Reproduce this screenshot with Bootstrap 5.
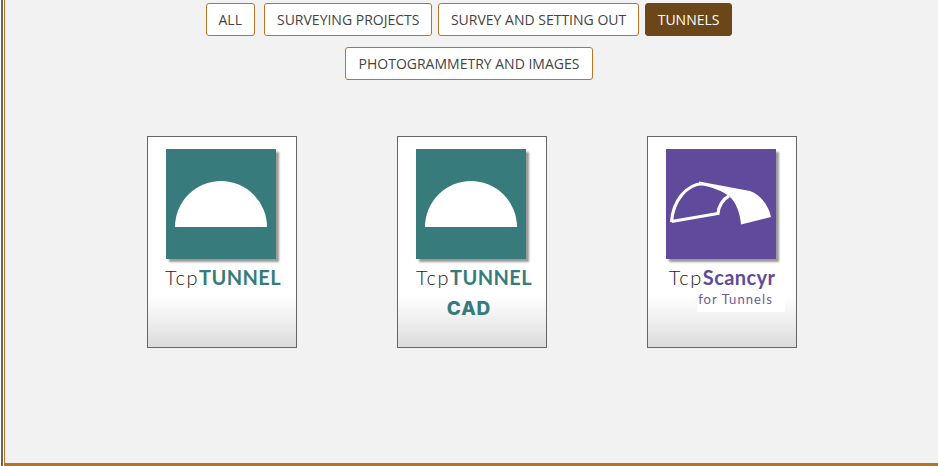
<!DOCTYPE html>
<html lang="en">
<head>
  <meta charset="UTF-8" />
  <title>Tunnels</title>
  <link href="https://cdn.jsdelivr.net/npm/bootstrap@5.3.0/dist/css/bootstrap.min.css" rel="stylesheet">
  <style>
    body { background: #f2f2f2; font-family: "Open Sans", sans-serif; overflow: hidden; }
    .page-frame {
      height: 466px;
      box-shadow: inset 1px 0 #fff, inset 3px 0 #6b625c, inset 4px 0 #fff, inset 5px 0 #b5741f, inset 0 -3px #b5741f;
    }
    .filter-bar { width: 700px; padding-top: 3px; column-gap: 5.5px; row-gap: 11px; }
    .filter-btn {
      background: #fff; border: 1px solid #b5762a; border-radius: 3px; color: #444;
      font-size: 14px; line-height: 19px; padding: 6px 12px; height: 33px;
    }
    .filter-btn:hover { background: #fff; border-color: #b5762a; color: #444; }
    .filter-btn.active, .filter-btn.active:hover { background: #6b4619; border-color: #6b4619; color: #fff; font-weight: 500; }
    .filter-all { margin-right: 3.5px; }
    .filter-wide { padding: 6px 13px; }
    .product-row { padding-left: 6px; margin-top: 56px; gap: 100px; }
    .product-tile {
      width: 150px; height: 212px; padding-top: 12px; border: 1px solid #666; border-radius: 0;
      background: linear-gradient(#fff 0, #fff 76%, #dcdcdc 100%);
    }
    .product-art { width: 110px; height: 110px; display: block; margin-right: 2px; box-shadow: 3px 3px 2px #999; }
    .product-name { font-family: Lato, sans-serif; font-size: 20px; line-height: 24px; margin-top: 6px; color: #222; font-weight: 300; letter-spacing: 1.5px; }
    .product-name b { font-weight: 700; letter-spacing: .4px; }
    .name-nudge { margin-left: 2px; }
    .tone-teal { color: #377b7d; }
    .tone-purple { color: #5f4a9b; }
    .product-cad { font-family: Inter, sans-serif; font-weight: 800; font-size: 19px; line-height: 18px; margin: 11px 6px 0 0; color: #377b7d; letter-spacing: .8px; }
    .product-sub { font-family: Lato, sans-serif; font-size: 13px; line-height: 15px; color: #6b5a9e; letter-spacing: 1.1px; background: #fff; align-self: flex-end; margin: 3px 11px 0 0; padding: 0 12px 5px 1px; }
  </style>
</head>
<body>
  <div class="page-frame">
    <!-- Filters -->
    <div class="filter-bar d-flex flex-wrap justify-content-center mx-auto">
      <button type="button" class="btn filter-btn filter-all">ALL</button>
      <button type="button" class="btn filter-btn">SURVEYING PROJECTS</button>
      <button type="button" class="btn filter-btn">SURVEY AND SETTING OUT</button>
      <button type="button" class="btn filter-btn active">TUNNELS</button>
      <button type="button" class="btn filter-btn filter-wide">PHOTOGRAMMETRY AND IMAGES</button>
    </div>

    <!-- Products -->
    <div class="product-row d-flex justify-content-center">
      <div class="card product-tile align-items-center">
        <svg class="product-art" viewBox="0 0 110 110">
          <rect width="110" height="110" fill="#377b7d"/>
          <path d="M9 78A46 46 0 0 1 101 78Z" fill="#fff"/>
        </svg>
        <div class="product-name name-nudge">Tcp<b class="tone-teal">TUNNEL</b></div>
      </div>
      <div class="card product-tile align-items-center">
        <svg class="product-art" viewBox="0 0 110 110">
          <rect width="110" height="110" fill="#377b7d"/>
          <path d="M9 78A46 46 0 0 1 101 78Z" fill="#fff"/>
        </svg>
        <div class="product-name ms-1">Tcp<b class="tone-teal">TUNNEL</b></div>
        <div class="product-cad">CAD</div>
      </div>
      <div class="card product-tile align-items-center">
        <svg class="product-art" viewBox="0 0 110 110">
          <rect width="110" height="110" fill="#5f4a9b"/>
          <path d="M33 32.500L84 42C95 46 103 57 105 68L75 75.500C74 64 70 53 63 47C56 42 47 38 33 36Z" fill="#fff"/>
          <path d="M5.500 73C7 52 20 35.500 37 34.500M63 47C57 50 52.500 57 52 64.500L5.500 72.500" fill="none" stroke="#fff" stroke-width="3.200"/>
        </svg>
        <div class="product-name">Tcp<b class="tone-purple">Scancyr</b></div>
        <div class="product-sub">for Tunnels</div>
      </div>
    </div>
  </div>

  <script src="https://cdn.jsdelivr.net/npm/bootstrap@5.3.0/dist/js/bootstrap.bundle.min.js"></script>
</body>
</html>
